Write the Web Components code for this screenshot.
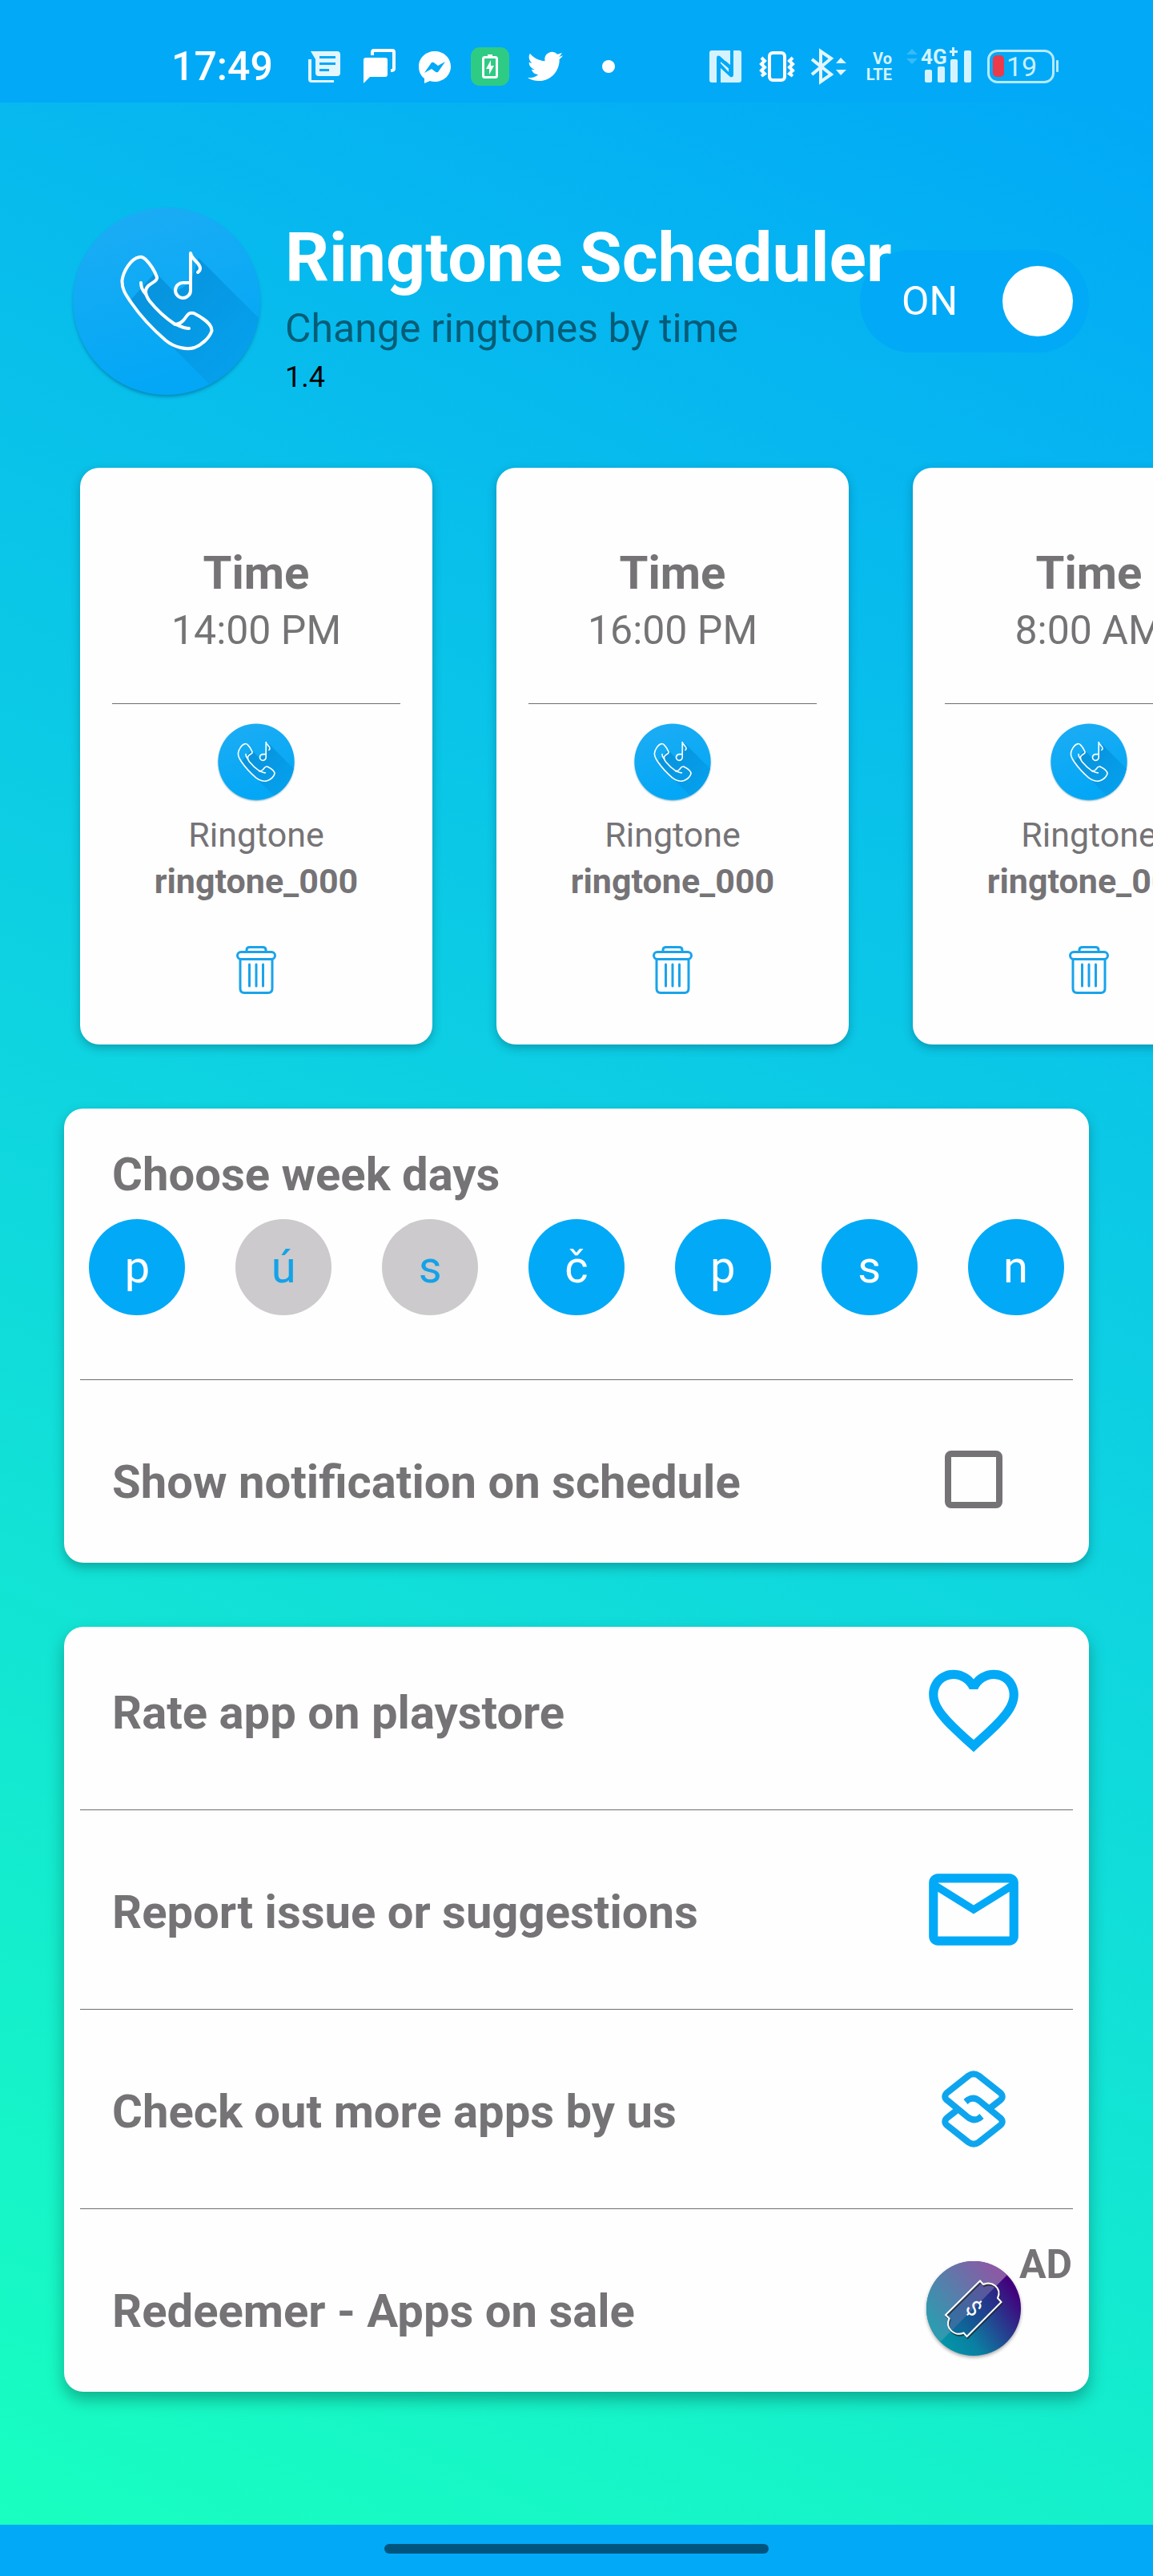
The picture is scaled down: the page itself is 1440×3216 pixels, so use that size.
<!DOCTYPE html>
<html lang="en">
<head>
<meta charset="utf-8">
<meta name="viewport" content="width=device-width, initial-scale=1">
<title>Ringtone Scheduler</title>
<style>
  :root {
    --accent: #02a9f7;
    --text: #757376;
    --divider: #6f6d70;
  }
  body {
    margin: 0;
    font-family: Roboto, "Noto Sans", sans-serif;
    color: var(--text);
  }
</style>
</head>
<body>

<app-shell>
  <status-bar slot="status">17:49</status-bar>

  <app-header>
    <span slot="title">Ringtone Scheduler</span>
    <span slot="subtitle">Change ringtones by time</span>
    <span slot="version">1.4</span>
  </app-header>

  <ringtone-list>
    <ringtone-card><span slot="time">14:00 PM</span><span slot="name">ringtone_000</span></ringtone-card>
    <ringtone-card><span slot="time">16:00 PM</span><span slot="name">ringtone_000</span></ringtone-card>
    <ringtone-card><span slot="time">8:00 AM</span><span slot="name">ringtone_000</span></ringtone-card>
  </ringtone-list>

  <panel-card>
    <day-picker days="p,ú,s,č,p,s,n" off="1,2">Choose week days</day-picker>
    <check-row>Show notification on schedule</check-row>
  </panel-card>

  <panel-card raised>
    <link-row icon="heart" first>Rate app on playstore</link-row>
    <link-row icon="mail">Report issue or suggestions</link-row>
    <link-row icon="stack">Check out more apps by us</link-row>
    <link-row icon="ticket" badge="AD" last>Redeemer - Apps on sale</link-row>
  </panel-card>

  <nav-bar slot="nav"></nav-bar>
</app-shell>

<script>
const ICONS = {
  heart: `<svg viewBox="0 0 24 24" fill="var(--accent)"><path d="M16.5 3c-1.74 0-3.41.81-4.5 2.09C10.91 3.81 9.24 3 7.5 3 4.42 3 2 5.42 2 8.5c0 3.78 3.4 6.86 8.55 11.54L12 21.35l1.45-1.32C18.6 15.36 22 12.28 22 8.5 22 5.42 19.58 3 16.5 3zm-4.4 15.55l-.1.1-.1-.1C7.14 14.24 4 11.39 4 8.5 4 6.5 5.5 5 7.5 5c1.54 0 3.04.99 3.57 2.36h1.87C13.46 5.99 14.96 5 16.5 5c2 0 3.5 1.5 3.5 3.5 0 2.89-3.14 5.74-7.9 10.05z"/></svg>`,

  mail: `<svg viewBox="0 0 24 24" fill="var(--accent)"><path d="M22 6c0-1.1-.9-2-2-2H4c-1.1 0-2 .9-2 2v12c0 1.1.9 2 2 2h16c1.1 0 2-.9 2-2V6zm-2 0l-8 5-8-5h16zm0 12H4V8l8 5 8-5v10z"/></svg>`,

  stack: `<svg viewBox="-27 -19 134 134" fill="none" stroke="#0fa5ee" stroke-width="8">
    <path id="half" d="M61 46.500L72.500 37.500Q79 32.500 72.500 27L46.500 6.500Q40 2 33.500 6.500L7.500 27Q1 32.500 7.500 37.500L32.500 58Q40 64 47 59.500L50 57"/>
    <use href="#half" transform="rotate(180 40 48)"/>
  </svg>`,

  ticket: `<svg viewBox="-8 -8 134 134">
    <defs>
      <linearGradient id="base" x1="0.100" y1="0.800" x2="0.900" y2="0.250">
        <stop offset="0" stop-color="#0396a8"/><stop offset=".3" stop-color="#0a7fa2"/><stop offset="1" stop-color="#42007c"/>
      </linearGradient>
      <linearGradient id="light" x1="0.100" y1="0.700" x2="0.800" y2="0.050">
        <stop offset="0" stop-color="#2e9bb1"/><stop offset="1" stop-color="#8a5aa5"/>
      </linearGradient>
      <clipPath id="disc"><circle cx="59" cy="59" r="59"/></clipPath>
      <filter id="soft" x="-20%" y="-20%" width="140%" height="140%"><feGaussianBlur stdDeviation="2"/></filter>
    </defs>
    <circle cx="59" cy="61" r="59" fill="#000" opacity=".35" filter="url(#soft)"/>
    <circle cx="59" cy="59" r="59" fill="url(#base)"/>
    <path d="M0 118L101 17L90 0H0Z" fill="url(#light)" clip-path="url(#disc)"/>
    <path d="M67 24.500L71 29C81 24 95 33 89 46L93.500 51L50.500 94L46.500 89.500C35 94 23 84 28.500 71.500L24 67Z" fill="#1c2f86" fill-opacity=".3"/>
    <g fill="none" stroke-width="2">
      <path transform="translate(1 2)" stroke="#222" stroke-opacity=".7" d="M67 24.500L71 29C81 24 95 33 89 46L93.500 51L50.500 94L46.500 89.500C35 94 23 84 28.500 71.500L24 67Z"/>
      <path stroke="#fff" d="M67 24.500L71 29C81 24 95 33 89 46L93.500 51L50.500 94L46.500 89.500C35 94 23 84 28.500 71.500L24 67Z"/>
    </g>
    <text transform="translate(59 59) rotate(45)" y="9" text-anchor="middle" font-size="27" font-weight="400" fill="#fff">$</text>
  </svg>`
};

const LOGO = `<svg viewBox="0 0 236 236">
  <defs>
    <linearGradient id="sky" x1="0" y1="0" x2="0.300" y2="1">
      <stop offset="0" stop-color="#1dadf4"/><stop offset="1" stop-color="#03a7f6"/>
    </linearGradient>
    <linearGradient id="cast" x1="0.200" y1="0.200" x2="0.900" y2="0.900">
      <stop offset="0" stop-color="#0894de"/><stop offset="1" stop-color="#04a2f0"/>
    </linearGradient>
    <clipPath id="round"><circle cx="118" cy="118" r="117"/></clipPath>
    <filter id="blur" x="-10%" y="-10%" width="120%" height="120%"><feGaussianBlur stdDeviation="2"/></filter>
  </defs>
  <circle cx="118" cy="121" r="116" fill="#046a97" opacity=".7" filter="url(#blur)"/>
  <circle cx="118" cy="118" r="117" fill="url(#sky)"/>
  <path d="M158 64L240 146V240H190L117 167L72 118L104 82L128 107L148 95Z" fill="url(#cast)" clip-path="url(#round)"/>
  <g fill="none" stroke="#fff" stroke-width="4" stroke-linecap="round" stroke-linejoin="round">
    <path d="M84 63C73 65 64 81 62.500 92C62 104 68 111 74 120C85 136 102 154 117 167C128 176 143 179 153 176C163 172 172 163 174.500 155C175 146 160 137 152 133C144 131 143 138 139 142C134 147 131 147 128 146.500C117 139 105 128 97 118C91 110 90 104 95 99C99 95 107 93 106 88C103 80 97 71 92 66Q88 62 84 63Z"/>
    <path d="M86 95C86 101 88 105 92 109M128 146.500C134 148 138 152 146 152"/>
    <path d="M148 103V58C150 67 160 70 160 77Q160 80 157 82M148 95H139A9.500 9.500 0 1 0 148 104"/>
  </g>
</svg>`;

// Registers a custom element whose shadow root is built from a css + html pair.
function define(name, css, html, setup) {
  customElements.define(name, class extends HTMLElement {
    constructor() {
      super();
      const shadow = this.attachShadow({ mode: 'open' });
      shadow.innerHTML = `<style>:host,*{box-sizing:border-box}${css}</style>${html(this)}`;
      if (setup) setup(this, shadow);
    }
  });
}

define('app-logo', `
  :host { display: block; width: var(--logo-size, 96px); height: var(--logo-size, 96px); }
  svg { display: block; width: 100%; height: 100%; overflow: visible; }
`, () => LOGO);

define('app-shell', `
  :host { display: flex; flex-direction: column; min-height: 100vh; }
  main {
    flex: 1;
    display: flex;
    flex-direction: column;
    padding-bottom: 80px;
    background: linear-gradient(25deg, #18ffc0, #0fd6df 48%, #02a9f7);
    overflow: hidden;
  }
`, () => `
  <slot name="status"></slot>
  <main><slot></slot></main>
  <slot name="nav"></slot>
`);

define('status-bar', `
  :host {
    display: flex;
    justify-content: space-between;
    height: 128px;
    padding: 59px 118px 0 214px;
    background: var(--accent);
    color: #fff;
  }
  div { display: flex; height: 48px; align-items: center; }
  .left { gap: 21px; }
  .right { gap: 16px; }
  time { font-size: 50px; line-height: 48px; font-weight: 500; width: 146px; }
  svg { display: block; height: 48px; }
  .volte {
    width: 40px;
    font: 700 20px/20px Roboto, sans-serif;
    color: #d5f3ff;
    text-align: right;
  }
`, () => `
  <div class="left">
    <time><slot></slot></time>
    <svg width="48" viewBox="0 0 48 48" fill="#e2f6ff">
      <path d="M4 15H8V41H36V44H8Q4 44 4 40Z"/>
      <path fill-rule="evenodd" d="M7 5H40Q44 5 44 9V32Q44 36 40 36H17Q13 36 13 32V15ZM18 11V14H38V11ZM18 19V22H38V19ZM18 27V30H30V27Z"/>
    </svg>
    <svg width="48" viewBox="0 0 48 48" fill="#fff">
      <path d="M7 13H31Q34 13 34 16V34Q34 37 31 37H12L4 45V16Q4 13 7 13Z"/>
      <path d="M15 10V6Q15 4 17 4H40Q42 4 42 6V27Q42 29 38 29" fill="none" stroke="#fff" stroke-width="4"/>
    </svg>
    <svg width="48" viewBox="0 0 48 48">
      <path fill="#fff" d="M24 5C35 5 44 13 44 24S35 43 24 43Q20 43 18 42L11 45V39C7 36 4 31 4 24C4 13 13 5 24 5Z"/>
      <path fill="var(--accent)" d="M11 32L20 19Q22 18 24 20L28 23L37 18L28 31Q26 32 24 30L20 27Z"/>
    </svg>
    <svg width="48" viewBox="0 0 48 48">
      <rect width="48" height="48" rx="11" fill="#2ecb85"/>
      <rect x="15.500" y="12.500" width="17" height="25" rx="2" fill="none" stroke="#fff" stroke-width="3"/>
      <path fill="#fff" d="M21 9H27V12H21ZM25 16L19 27H23V34L29 23H25Z"/>
    </svg>
    <svg width="48" viewBox="-1 -1 26 26" fill="#fff">
      <path d="M23.953 4.57a10 10 0 01-2.825.775 4.958 4.958 0 002.163-2.723c-.951.555-2.005.959-3.127 1.184a4.92 4.92 0 00-8.384 4.482C7.69 8.095 4.067 6.13 1.64 3.162a4.822 4.822 0 00-.666 2.475c0 1.71.87 3.213 2.188 4.096a4.904 4.904 0 01-2.228-.616v.06a4.923 4.923 0 003.946 4.827 4.996 4.996 0 01-2.212.085 4.936 4.936 0 004.604 3.417 9.867 9.867 0 01-6.102 2.105c-.39 0-.779-.023-1.17-.067a13.995 13.995 0 007.557 2.209c9.053 0 13.998-7.496 13.998-13.985 0-.21 0-.42-.015-.63A9.935 9.935 0 0024 4.59z"/>
    </svg>
    <svg width="68" viewBox="0 0 68 48" fill="#fff"><circle cx="34" cy="24" r="8"/></svg>
  </div>
  <div class="right">
    <svg width="48" viewBox="0 0 48 48">
      <rect x="4" y="4" width="40" height="40" rx="3" fill="#d5f3ff"/>
      <path fill="var(--accent)" d="M30 4H34V34Q34 38 30 37L18 26V20L28 31V26L24 22V17L30 22Z"/>
      <path fill="var(--accent)" d="M18 44H13V14Q13 9 17 11L30 23V28L18 18Z"/>
    </svg>
    <svg width="48" viewBox="0 0 48 48" fill="none" stroke="#fff" stroke-width="4">
      <rect x="15" y="7" width="19" height="34" rx="4"/>
      <path stroke-width="4" d="M5 13L9 17L5 21L9 25L5 29L9 33L5 36M44 13L40 17L44 21L40 25L44 29L40 33L44 36"/>
    </svg>
    <svg width="48" viewBox="0 0 48 48" fill="none" stroke="#e2f6ff" stroke-width="4">
      <path d="M4 15L28 34L15 43V5L28 14L4 34"/>
      <path d="M34 20L40 13L47 20ZM34 28L40 35L47 28Z" fill="#e2f6ff" stroke="none"/>
    </svg>
    <span class="volte">Vo<br>LTE</span>
    <svg width="84" viewBox="0 0 84 48" fill="#d5f3ff">
      <path opacity=".25" d="M2 9L9 2L16 9ZM2 14L9 21L16 14Z"/>
      <path d="M56 4H59V0H62V4H66V7H62V11H59V7H56Z"/>
      <text x="20" y="21" font-size="26" font-weight="700">4G</text>
      <rect x="25" y="28" width="9" height="16" rx="2"/>
      <rect x="41" y="24" width="9" height="20" rx="2"/>
      <rect x="57" y="15" width="9" height="29" rx="2"/>
      <rect x="74" y="4" width="9" height="40" rx="2"/>
    </svg>
    <svg width="92" viewBox="0 0 92 48">
      <rect x="4.500" y="4.500" width="81" height="39" rx="11" fill="none" stroke="#b5eaff" stroke-width="3"/>
      <rect x="10" y="10" width="14" height="27" rx="5" fill="#eb3a4a"/>
      <rect x="89" y="16" width="3" height="15" rx="1" fill="#b5eaff"/>
      <text x="27" y="36" font-size="34" fill="#c9f0ff">19</text>
    </svg>
  </div>
`);

define('app-header', `
  :host {
    display: flex;
    align-items: flex-end;
    padding: 130px 80px 50px 90px;
    color: #fff;
  }
  app-logo { --logo-size: 236px; flex: none; }
  .text {
    flex: 1;
    min-width: 0;
    padding-left: 30px;
    white-space: nowrap;
    position: relative;
    z-index: 1;
  }
  h1 { margin: 0; font-size: 86px; line-height: 100px; font-weight: 700; }
  p { margin: 0; font-size: 50px; line-height: 76px; color: rgba(0, 0, 0, .5); }
  small { display: block; font-size: 36px; line-height: 46px; color: #000; }
  label {
    align-self: center;
    display: flex;
    align-items: center;
    justify-content: space-between;
    width: 286px;
    height: 128px;
    padding: 0 20px 0 52px;
    border-radius: 64px;
    background: var(--accent);
    font-size: 50px;
  }
  input {
    appearance: none;
    width: 88px;
    height: 88px;
    margin: 0;
    border-radius: 50%;
    background: #fff;
  }
`, () => `
  <app-logo></app-logo>
  <div class="text">
    <h1><slot name="title"></slot></h1>
    <p><slot name="subtitle"></slot></p>
    <small><slot name="version"></slot></small>
  </div>
  <label>ON <input type="checkbox" role="switch" checked></label>
`);

define('ringtone-list', `
  :host {
    display: flex;
    gap: 80px;
    margin-bottom: 40px;
    padding: 40px 100px;
    overflow-x: auto;
    scrollbar-width: none;
  }
`, () => `<slot></slot>`);

define('ringtone-card', `
  :host {
    flex: none;
    display: flex;
    flex-direction: column;
    align-items: center;
    width: 440px;
    padding: 97px 40px 63px;
    border-radius: 24px;
    background: #fefefe;
    box-shadow: 0 4px 12px rgba(0, 40, 60, .3);
  }
  h2 { margin: 0; font-size: 58px; line-height: 68px; }
  .time { font-size: 50px; line-height: 76px; }
  hr { width: 100%; height: 1px; margin: 53px 0 24px; border: 0; background: var(--divider); }
  .label { margin-top: 14px; font-size: 43px; line-height: 58px; }
  .name { font-size: 43px; line-height: 58px; font-weight: 700; }
  button { margin: 52px 0 0; padding: 0; border: 0; background: none; }
  svg { display: block; width: 50px; height: 60px; }
`, () => `
  <h2>Time</h2>
  <div class="time"><slot name="time"></slot></div>
  <hr>
  <app-logo></app-logo>
  <div class="label">Ringtone</div>
  <div class="name"><slot name="name"></slot></div>
  <button type="button" aria-label="Delete">
    <svg viewBox="0 0 50 60" fill="none" stroke="#1aa3ea" stroke-width="3" stroke-linecap="round">
      <path d="M13 7V5Q13 1.500 17 1.500H33Q37 1.500 37 5V7"/>
      <rect x="1.500" y="7.500" width="47" height="9" rx="4.500"/>
      <path d="M5 17V53Q5 58.500 10 58.500H40Q45 58.500 45 53V17M16.500 23V50M25 23V50M33.500 23V50"/>
    </svg>
  </button>
`, (host, shadow) => {
  shadow.querySelector('button').onclick = () => host.remove();
});

define('panel-card', `
  :host {
    display: block;
    margin: 0 80px 80px;
    border-radius: 24px;
    background: #fefefe;
    box-shadow: 0 6px 14px rgba(0, 60, 60, .35);
  }
  :host([raised]) { box-shadow: 0 10px 20px rgba(0, 70, 60, .4); }
`, () => `<slot></slot>`);

define('day-picker', `
  :host { display: block; padding-top: 48px; }
  h2 { margin: 0 60px 22px; font-size: 58px; line-height: 68px; }
  .days { display: grid; grid-template-columns: repeat(7, 1fr); justify-items: center; }
  button {
    width: 120px;
    height: 120px;
    padding: 0;
    border: 0;
    border-radius: 50%;
    background: #cccacc;
    color: #14a2e8;
    font: 400 56px Roboto, sans-serif;
  }
  button[aria-pressed="true"] { background: var(--accent); color: #fff; }
  hr { height: 1px; margin: 80px 20px 0; border: 0; background: var(--divider); }
`, (host) => {
  const off = host.getAttribute('off').split(',');
  const days = host.getAttribute('days').split(',')
    .map((d, i) => `<button type="button" aria-pressed="${!off.includes(String(i))}">${d}</button>`)
    .join('');
  return `<h2><slot></slot></h2><div class="days">${days}</div><hr>`;
}, (host, shadow) => {
  shadow.querySelectorAll('button').forEach((b) => {
    b.onclick = () => b.setAttribute('aria-pressed', b.getAttribute('aria-pressed') !== 'true');
  });
});

const ROW_CSS = `
  :host { display: block; font-size: 58px; font-weight: 700; }
  .row {
    display: flex;
    align-items: center;
    justify-content: space-between;
    padding: 57px 77px 57px 60px;
    color: inherit;
    text-decoration: none;
  }
  .text { padding-top: 6px; line-height: 68px; }
  .icon { position: relative; display: grid; place-items: center; width: 134px; height: 134px; }
`;

define('check-row', ROW_CSS + `
  .row { padding-bottom: 37px; }
  input {
    appearance: none;
    width: 72px;
    height: 72px;
    margin: 0;
    border: 8px solid var(--text);
    border-radius: 8px;
  }
  input:checked { background: var(--accent); border-color: var(--accent); }
`, () => `
  <label class="row">
    <span class="text"><slot></slot></span>
    <span class="icon"><input type="checkbox"></span>
  </label>
`);

define('link-row', ROW_CSS + `
  :host([first]) .row { padding-top: 37px; }
  :host([last]) .row { padding-bottom: 37px; }
  :host([last]) hr { display: none; }
  hr { height: 1px; margin: 0 20px; border: 0; background: var(--divider); }
  svg { display: block; width: 134px; height: 134px; }
  .badge { position: absolute; left: 124px; top: -18px; font-size: 50px; line-height: 60px; }
`, (host) => `
  <a class="row" href="#">
    <span class="text"><slot></slot></span>
    <span class="icon">
      ${ICONS[host.getAttribute('icon')]}
      ${host.hasAttribute('badge') ? `<span class="badge">${host.getAttribute('badge')}</span>` : ''}
    </span>
  </a>
  <hr>
`);

define('nav-bar', `
  :host {
    display: flex;
    justify-content: center;
    align-items: flex-start;
    height: 64px;
    padding-top: 24px;
    background: var(--accent);
  }
  div { width: 480px; height: 12px; border-radius: 6px; background: #00557e; }
`, () => `<div></div>`);
</script>
</body>
</html>
